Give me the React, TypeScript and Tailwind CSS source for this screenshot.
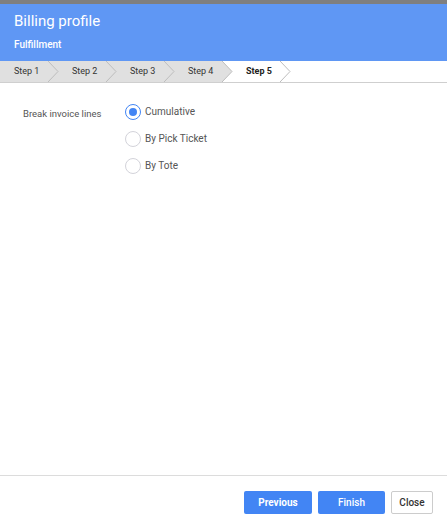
import React from 'react';

const steps = ['Step 1', 'Step 2', 'Step 3', 'Step 4', 'Step 5'];
const current = 4;

function StepArrow({ fill }: { fill: string }) {
  return (
    <svg
      className="absolute left-full top-0 z-10"
      width="11"
      height="21"
      viewBox="0 0 11 21"
    >
      <polygon points="0,0 10,10.5 0,21" fill={fill} />
      <polyline
        points="0,0 10,10.5 0,21"
        fill="none"
        stroke="#bdbdbd"
        strokeWidth="1"
      />
    </svg>
  );
}

function Radio({ label, checked }: { label: string; checked?: boolean }) {
  return (
    <label className="flex h-[27px] items-center gap-1 text-[10px] text-[#555]">
      {checked ? (
        <span className="flex h-4 w-4 items-center justify-center rounded-full border-[1.5px] border-[#4285f4]">
          <span className="h-2 w-2 rounded-full bg-[#4285f4]" />
        </span>
      ) : (
        <span className="h-4 w-4 rounded-full border border-[#d3d3da]" />
      )}
      <span>{label}</span>
    </label>
  );
}

export default function App() {
  return (
    <div
      className="flex h-[525px] w-[447px] flex-col bg-white"
      style={{ fontFamily: 'Roboto, "Liberation Sans", sans-serif' }}
    >
      <div className="h-1 bg-[#7f7f7f]" />
      <div className="flex h-[57px] flex-col bg-[#5f97f4] px-[14px] pt-2 text-white">
        <div className="text-[15px] leading-[18px]">Billing profile</div>
        <div className="mt-[9px] text-[10px] font-medium leading-[12px]">
          Fulfillment
        </div>
      </div>

      <div className="flex h-[22px] border-b border-[#cfcfcf] bg-white">
        {steps.map((s, i) => {
          const active = i === current;
          const bg = active ? '#ffffff' : '#e0e0e0';
          return (
            <div
              key={s}
              className={`relative h-[21px] text-[9px] leading-[21px] ${
                i === 0 ? 'w-[48px] pl-[14px]' : 'w-[58px] pl-[24px]'
              } ${active ? 'font-bold text-[#222]' : 'text-[#333]'}`}
              style={{ background: bg }}
            >
              {s}
              <StepArrow fill={bg} />
            </div>
          );
        })}
      </div>

      <div className="flex flex-1 pl-[23px] pt-[15px]">
        <div className="mt-[2px] w-[102px] text-[9.5px] leading-[27px] text-[#555]">
          Break invoice lines
        </div>
        <div className="flex flex-col">
          <Radio label="Cumulative" checked />
          <Radio label="By Pick Ticket" />
          <Radio label="By Tote" />
        </div>
      </div>

      <div className="flex justify-end gap-[6px] border-t border-[#dcdcdc] pb-[11px] pr-[14px] pt-[15px]">
        <button className="h-[23px] w-[68px] rounded-[2px] bg-[#4285f4] text-[10px] font-bold text-white">
          Previous
        </button>
        <button className="h-[23px] w-[67px] rounded-[2px] bg-[#4285f4] text-[10px] font-medium text-white">
          Finish
        </button>
        <button className="h-[23px] w-[42px] rounded-[2px] border border-[#cccccc] bg-white text-[10px] font-medium text-[#333]">
          Close
        </button>
      </div>
    </div>
  );
}
